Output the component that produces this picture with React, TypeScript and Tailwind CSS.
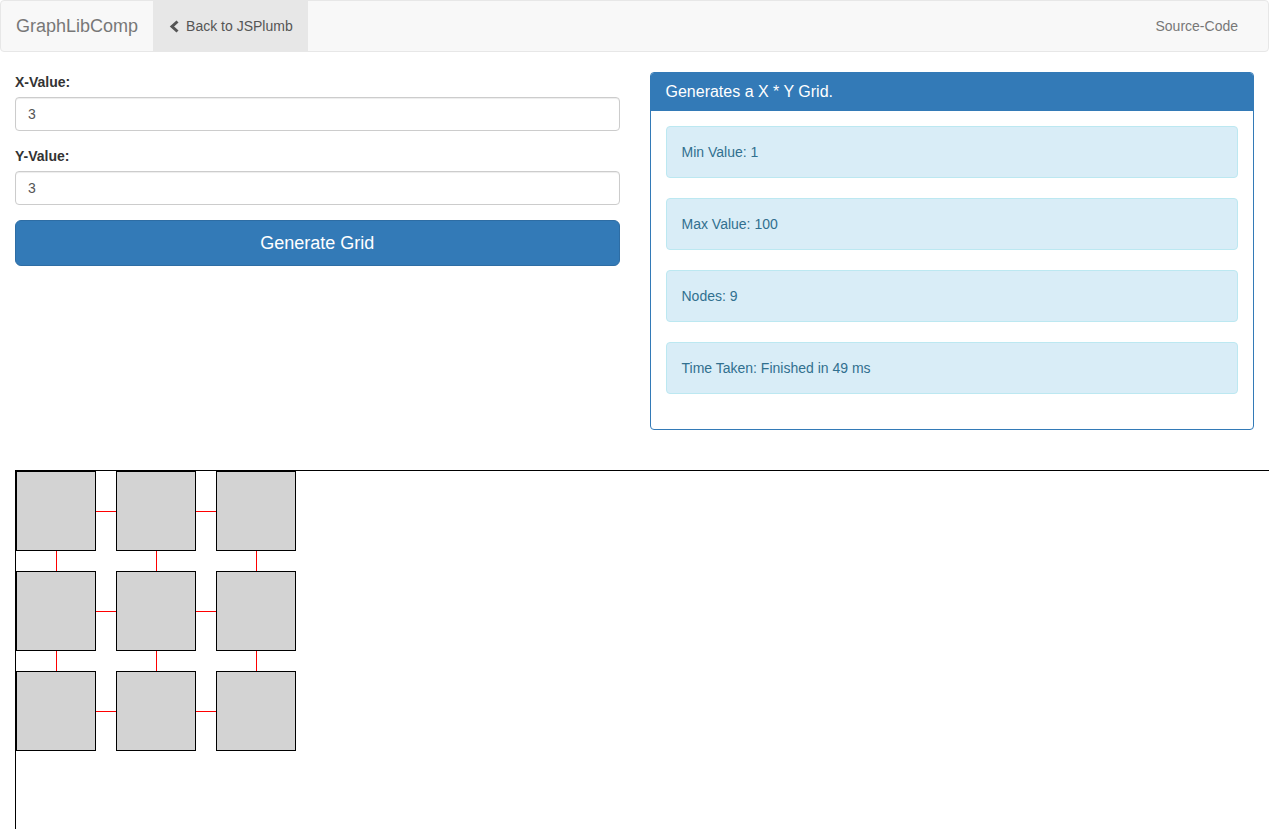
import React from "react"

const FONT = { fontFamily: '"Liberation Sans", Arial, sans-serif' }

const COLS = 3
const ROWS = 3
const STEP = 100
const SIZE = 80

const ChevronLeft = () => (
  <svg width="12" height="13" viewBox="0 0 12 13" className="mr-[5px] ml-[1px] inline-block">
    <polyline
      points="8.5,1.5 3,6.5 8.5,11.5"
      fill="none"
      stroke="#555"
      strokeWidth={3}
      strokeLinejoin="miter"
    />
  </svg>
)

const Navbar = () => (
  <nav className="flex h-[52px] items-stretch rounded-[4px] border border-[#e7e7e7] bg-[#f8f8f8]">
    <a className="flex items-center px-[15px] text-[18px] leading-[20px] text-[#777]">GraphLibComp</a>
    <a className="flex items-center bg-[#e7e7e7] px-[15px] text-[14px] text-[#555]">
      <ChevronLeft />
      Back to JSPlumb
    </a>
    <div className="flex-1" />
    <a className="mr-[15px] flex items-center px-[15px] text-[14px] text-[#777]">Source-Code</a>
  </nav>
)

const Field = ({ label, value }: { label: string; value: string }) => (
  <div className="mb-[15px] flex flex-col">
    <label className="mb-[5px] text-[14px] leading-[20px] font-bold text-[#333]">{label}</label>
    <input
      readOnly
      value={value}
      className="h-[34px] rounded-[4px] border border-[#ccc] bg-white px-[12px] text-[14px] text-[#555] shadow-[inset_0_1px_1px_rgba(0,0,0,0.075)] outline-none"
    />
  </div>
)

const Alert = ({ text }: { text: string }) => (
  <div className="mb-[20px] rounded-[4px] border border-[#bce8f1] bg-[#d9edf7] p-[15px] text-[14px] leading-[20px] text-[#31708f]">
    {text}
  </div>
)

const GridCanvas = () => {
  const nodes: { x: number; y: number }[] = []
  for (let r = 0; r < ROWS; r++) {
    for (let c = 0; c < COLS; c++) nodes.push({ x: c * STEP, y: r * STEP })
  }

  return (
    <div className="relative -mr-[15px] h-[380px] border-t border-l border-black">
      <svg className="absolute top-0 left-0" width={COLS * STEP} height={ROWS * STEP}>
        {nodes.map((n, i) => {
          const col = i % COLS
          const row = Math.floor(i / COLS)
          return (
            <g key={i}>
              {col < COLS - 1 && (
                <line x1={n.x + SIZE} y1={n.y + 40.5} x2={n.x + STEP} y2={n.y + 40.5} stroke="red" strokeWidth={1} />
              )}
              {row < ROWS - 1 && (
                <line x1={n.x + 40.5} y1={n.y + SIZE} x2={n.x + 40.5} y2={n.y + STEP} stroke="red" strokeWidth={1} />
              )}
            </g>
          )
        })}
      </svg>
      {nodes.map((n, i) => (
        <div
          key={i}
          className="absolute h-[80px] w-[80px] border border-black bg-[#d3d3d3]"
          style={{ left: n.x, top: n.y }}
        />
      ))}
    </div>
  )
}

export default function App() {
  return (
    <div style={FONT} className="min-h-[829px] bg-white text-[14px] text-[#333]">
      <Navbar />
      <div className="px-[15px] pt-[20px]">
        <div className="-mx-[15px] flex">
          <div className="w-1/2 px-[15px]">
            <Field label="X-Value:" value="3" />
            <Field label="Y-Value:" value="3" />
            <button className="h-[46px] w-full rounded-[6px] border border-[#2e6da4] bg-[#337ab7] text-[18px] text-white">
              Generate Grid
            </button>
          </div>
          <div className="w-1/2 px-[15px]">
            <div className="mb-[20px] rounded-[4px] border border-[#337ab7] bg-white">
              <div className="rounded-t-[3px] bg-[#337ab7] px-[15px] py-[10px] text-[16px] leading-[18px] text-white">
                Generates a X * Y Grid.
              </div>
              <div className="p-[15px]">
                <Alert text="Min Value: 1" />
                <Alert text="Max Value: 100" />
                <Alert text="Nodes: 9" />
                <Alert text="Time Taken: Finished in 49 ms" />
              </div>
            </div>
          </div>
        </div>
        <div className="mt-[20px]">
          <GridCanvas />
        </div>
      </div>
    </div>
  )
}
